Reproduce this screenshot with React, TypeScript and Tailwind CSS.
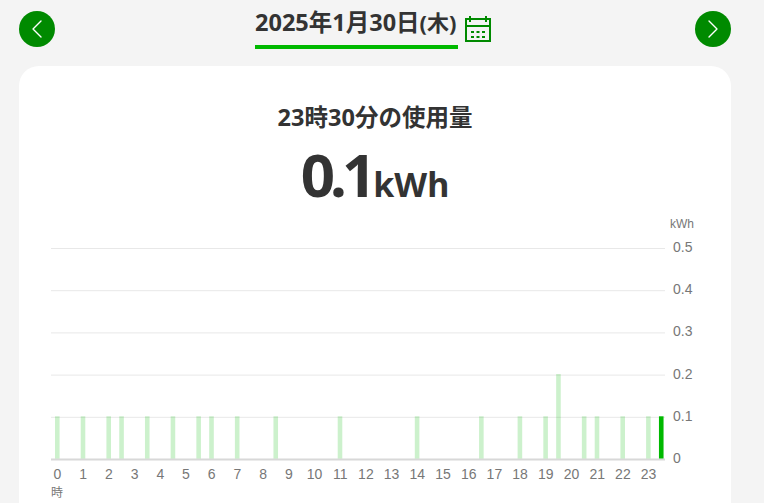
import { ChevronLeft, ChevronRight } from 'lucide-react'

const SLOT = 12.85
const CHART_LEFT = 32
const BASE_Y = 243
const UNIT = 42.2

// half-hour slot index and usage
const usage: [number, number][] = [
  [0, 0.1], [2, 0.1], [4, 0.1], [5, 0.1], [7, 0.1], [9, 0.1], [11, 0.1], [12, 0.1], [14, 0.1],
  [17, 0.1], [22, 0.1], [28, 0.1], [33, 0.1], [36, 0.1], [38, 0.1], [39, 0.2], [41, 0.1],
  [42, 0.1], [44, 0.1], [46, 0.1], [47, 0.1],
]

function CalendarIcon() {
  return (
    <svg width="28" height="28" viewBox="0 0 28 28" fill="none" stroke="#008a00" strokeWidth="2">
      <rect x="2" y="4" width="24" height="22" />
      <path d="M2 11h24M6 1v6M22 1v6" />
      <path d="M7 17h3M12.5 17h3M18 17h3M7 22h3M12.5 22h3M18 22h3" />
    </svg>
  )
}

function UsageChart() {
  return (
    <svg width="712" height="304" viewBox="0 0 712 304" className="block" style={{ fontFamily: '"Liberation Sans", sans-serif' }}>
      <text x="651" y="12" fontSize="12" fill="#777">kWh</text>
      {[0, 1, 2, 3, 4, 5].map((n) => {
        const y = BASE_Y - n * UNIT + 0.5
        return (
          <g key={n}>
            <line x1={CHART_LEFT} x2="646" y1={y} y2={y} stroke={n === 0 ? '#d8d8d8' : '#e8e8e8'} strokeWidth={n === 0 ? 2 : 1} />
            <text x="654" y={y + 3.5} fontSize="14" fill="#777">
              {n === 0 ? '0' : `0.${n}`}
            </text>
          </g>
        )
      })}
      {usage.map(([slot, value]) => {
        const h = (value / 0.1) * UNIT
        return (
          <rect key={slot} x={36 + slot * SLOT} y={BASE_Y - 0.5 - h} width="4.6" height={h} fill="#00b900" fillOpacity={slot === 47 ? 1 : 0.2} />
        )
      })}
      {Array.from({ length: 24 }, (_, hour) => (
        <text key={hour} x={38.5 + hour * SLOT * 2} y="263" fontSize="14" fill="#777" textAnchor="middle">
          {hour}
        </text>
      ))}
      <text x={CHART_LEFT} y="281" fontSize="12" fill="#777" style={{ fontFamily: '"Noto Sans CJK JP", sans-serif' }}>時</text>
    </svg>
  )
}

export default function App() {
  return (
    <div
      className="h-screen overflow-hidden bg-[#f4f4f4] px-[19px] pt-[11px] text-[#333]"
      style={{ fontFamily: '"Noto Sans", "Noto Sans CJK JP", sans-serif' }}
    >
      <header className="flex h-[38px] w-[712px] items-start justify-between">
        <button className="flex size-9 items-center justify-center rounded-full bg-[#008a00] text-white">
          <ChevronLeft size={32} strokeWidth={1} />
        </button>
        <div className="-ml-[3px] flex items-start gap-[6px]">
          <div className="-mt-[11px] box-content h-[45px] w-[203px] border-b-4 border-[#00b900]">
            <div className="pt-[2px] text-[23.5px] leading-[40px] font-bold whitespace-nowrap">
              2025年1月30日<span className="text-[22px]">(木)</span>
            </div>
          </div>
          <div className="mt-[4px]">
            <CalendarIcon />
          </div>
        </div>
        <button className="flex size-9 items-center justify-center rounded-full bg-[#008a00] text-white">
          <ChevronRight size={32} strokeWidth={1} />
        </button>
      </header>
      <main className="mt-[17px] w-[712px] rounded-t-[20px] bg-white pt-[34px]">
        <h2 className="text-center text-[23.5px] leading-[34px] font-bold">23時30分の使用量</h2>
        <div className="flex h-[82px] items-baseline justify-center">
          <span className="text-[60px] leading-[80px] font-bold tracking-[-5px]">0.1</span>
          <span className="ml-[2px] text-[34px] leading-[80px] font-bold">kWh</span>
        </div>
        <UsageChart />
      </main>
    </div>
  )
}
